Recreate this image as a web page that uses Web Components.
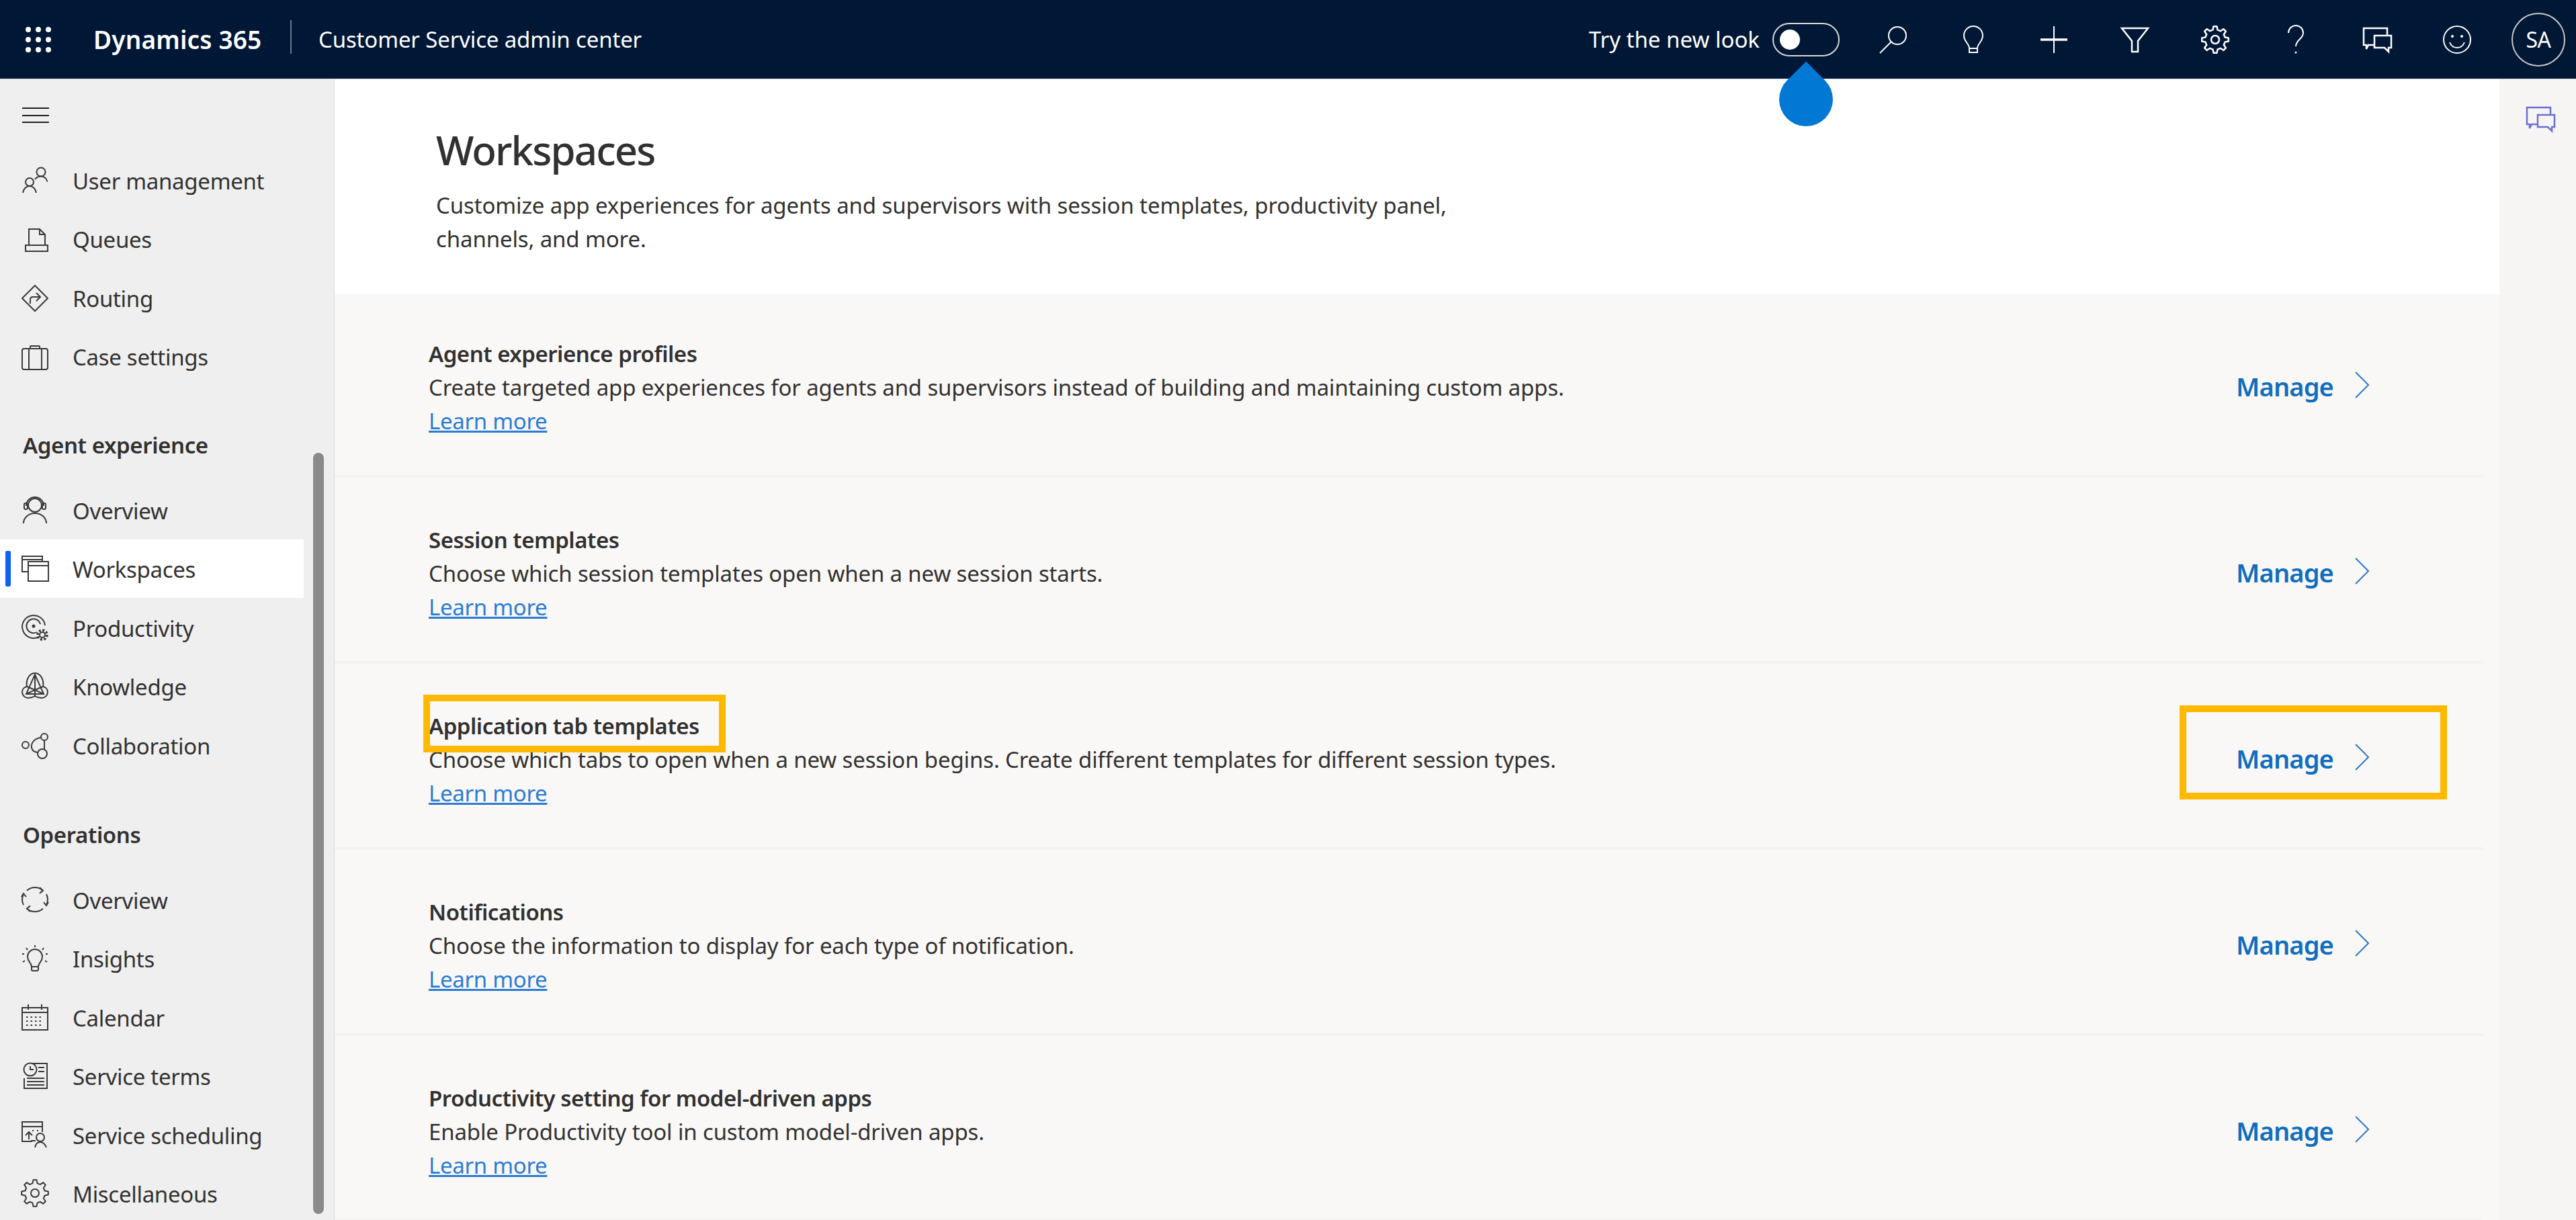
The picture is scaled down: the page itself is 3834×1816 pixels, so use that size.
<!DOCTYPE html>
<html lang="en">
<head>
<meta charset="utf-8">
<title>Customer Service admin center</title>
<style>
  html, body { margin: 0; height: 100%; overflow: hidden; background: #fff; }
  body { font-family: "Noto Sans", "Open Sans", sans-serif; color: #323130; }
</style>
</head>
<body>
<app-shell>
  <top-bar slot="top"></top-bar>
  <side-nav slot="nav">
    <nav-item icon="users">User management</nav-item>
    <nav-item icon="queues">Queues</nav-item>
    <nav-item icon="routing">Routing</nav-item>
    <nav-item icon="case">Case settings</nav-item>
    <nav-heading>Agent experience</nav-heading>
    <nav-item icon="agent">Overview</nav-item>
    <nav-item icon="windows" active>Workspaces</nav-item>
    <nav-item icon="target">Productivity</nav-item>
    <nav-item icon="knowledge">Knowledge</nav-item>
    <nav-item icon="collab">Collaboration</nav-item>
    <nav-heading style="margin-top:1.5px">Operations</nav-heading>
    <nav-item icon="cycle">Overview</nav-item>
    <nav-item icon="insights">Insights</nav-item>
    <nav-item icon="calendar">Calendar</nav-item>
    <nav-item icon="terms">Service terms</nav-item>
    <nav-item icon="schedule">Service scheduling</nav-item>
    <nav-item icon="gear">Miscellaneous</nav-item>
  </side-nav>
  <page-intro slot="main" heading="Workspaces">Customize app experiences for agents and supervisors with session templates, productivity panel, channels, and more.</page-intro>
  <work-row slot="main" first heading="Agent experience profiles">Create targeted app experiences for agents and supervisors instead of building and maintaining custom apps.</work-row>
  <work-row slot="main" heading="Session templates">Choose which session templates open when a new session starts.</work-row>
  <work-row slot="main" marked heading="Application tab templates">Choose which tabs to open when a new session begins. Create different templates for different session types.</work-row>
  <work-row slot="main" heading="Notifications">Choose the information to display for each type of notification.</work-row>
  <work-row slot="main" heading="Productivity setting for model-driven apps">Enable Productivity tool in custom model-driven apps.</work-row>
  <side-rail slot="rail"></side-rail>
</app-shell>

<script>
function gearPath(c, ro, ri, n) {
  var p = Math.PI * 2 / n, pts = [];
  for (var i = 0; i < n; i++) {
    var a = i * p;
    [[ri, -0.3], [ro, -0.16], [ro, 0.16], [ri, 0.3]].forEach(function (q) {
      var x = c + q[0] * Math.cos(a + q[1] * p), y = c + q[0] * Math.sin(a + q[1] * p);
      pts.push(x.toFixed(1) + " " + y.toFixed(1));
    });
  }
  return "M" + pts.join("L") + "Z";
}

// 40 box for the side nav, 48 box for the top bar
var ICONS = {
  users: '<circle cx="29" cy="8" r="6.5"/><path d="M20 19c2-3 5-4.500 9-4.500s8 2.500 9.500 8"/><circle cx="12" cy="23" r="6"/><path d="M2 39c1-6 5-10 10-10s9 4 10 10"/>',
  queues: '<path d="M11 30V6h16l8 8v16M27 6v8h8"/><rect x="6" y="30" width="33" height="9"/>',
  routing: '<path d="M20 2l19 19-19 19L1 21z" stroke-linejoin="round"/><path d="M13 29v-6c0-3 2-4 4-4h11M22 13l6 6-6 6"/>',
  case: '<rect x="1" y="9" width="38" height="31" rx="3"/><path d="M11 9v31M30 9v31M13 9V6a1 1 0 011-1h12a1 1 0 011 1v3"/>',
  agent: '<circle cx="20" cy="13" r="10"/><path d="M3 40c0-8 7-15 17-15s17 7 17 15M7 14a13 13 0 0126 0"/><rect x="4" y="10" width="5" height="9" rx="2"/><rect x="31" y="10" width="5" height="9" rx="2"/>',
  windows: '<path d="M9 25H1V2h30v8M1 7h30"/><rect x="10" y="10" width="30" height="29"/><path d="M10 16h30"/>',
  target: '<path d="M26 34A17 17 0 1135 17"/><path d="M23 27A10.500 10.500 0 1128 15"/><circle cx="18" cy="18" r="2.500" fill="currentColor" stroke="none"/><circle cx="31" cy="31" r="4"/><circle cx="31" cy="31" r="7" stroke-width="3.500" stroke-dasharray="3 2.500"/>',
  knowledge: '<path d="M8 21C6 9 13 1 20 1s14 8 12 20"/><path d="M8 21c-5 1-7 5-7 8 0 5 4 9 9 9 4 0 7-1 10-3 3 2 6 3 10 3 5 0 9-4 9-9 0-3-2-7-7-8"/><path d="M20 3L7 32h26zM20 3v32M8 21l12 5 12-5M7 32l13-6 13 6"/>',
  collab: '<circle cx="6" cy="20" r="5"/><circle cx="34" cy="8" r="5"/><circle cx="31" cy="33" r="7"/><path d="M29 9c-9 1-15 7-14 15 1 4 4 7 10 7M34 13v13"/>',
  cycle: '<path d="M8 6.600A18 18 0 0132 6.600M37 12A18 18 0 0137 28M32 33.400A18 18 0 018 33.400M3 28A18 18 0 013 12"/><path d="M27 2l5 4.600-5 4M13 38l-5-4.600 5-4M33 24l4 5 3-5M0 16l3-5 4 5"/>',
  insights: '<path d="M15 33c0-6-6-7-6-15a11 11 0 0122 0c0 8-6 9-6 15v4c0 1-1 2-2 2h-6c-1 0-2-1-2-2z"/><path d="M15 33h10M20 1v3M7 5l2 3M33 5l-2 3M1 14h3M36 14h3M2 26l3-2M38 26l-3-2"/>',
  calendar: '<rect x="1" y="6" width="38" height="33"/><path d="M1 13h38M10 1v8M30 1v8"/><path d="M7 20h26M7 26h26M7 32h26" stroke-dasharray="2.500 4"/>',
  terms: '<path d="M4 24v15h34V2H16"/><circle cx="13" cy="11" r="9.500"/><path d="M13 6v5h5M25 8h9M25 14h9M8 24h26M8 29h26M8 34h26"/>',
  schedule: '<path d="M16 30H1V1h30v15M1 8h30"/><path d="M11 27V16M6 21l5-5 5 5M14 29h7"/><circle cx="28" cy="24" r="6"/><path d="M20 39c1-5 4-8 8-8s7 3 9 8"/><path d="M16 14h2M23 14h2"/>',
  gear: '<path d="' + gearPath(20, 20, 15, 8) + '" stroke-linejoin="round"/><circle cx="20" cy="20" r="6"/>',
  search: '<circle cx="31" cy="18" r="13"/><path d="M22 27L5 44"/>',
  bulb: '<path d="M18 37c0-7-8-10-8-19a14 14 0 0128 0c0 9-8 12-8 19v6H18z"/><path d="M18 37h12"/>',
  plus: '<path d="M24 4v40"/><path d="M4 24h40" stroke-width="3.500"/>',
  filter: '<path d="M5 7h39L29 26v16h-9V26z" stroke-width="2.500"/>',
  cog: '<path d="' + gearPath(24, 20, 15, 8) + '" stroke-linejoin="round" stroke-width="2.500"/><circle cx="24" cy="24" r="6" stroke-width="2.500"/>',
  help: '<path d="M13 14a11 11 0 0122 0c0 9-11 10-11 20"/><circle cx="24" cy="43" r="1.500" fill="currentColor" stroke="none"/>',
  chat: '<path d="M20 32h-8l-3 6v-6H5V7h35v11" stroke-width="2.500"/><path d="M21 18h25v18h-4v6l-6-6H21z" stroke-width="2.500"/>',
  smile: '<circle cx="24" cy="24" r="20"/><circle cx="17" cy="19" r="2" fill="currentColor" stroke="none"/><circle cx="31" cy="19" r="2" fill="currentColor" stroke="none"/><path d="M13 28c2 5 6 8 11 8s9-3 11-8"/>'
};

class AppIcon extends HTMLElement {
  connectedCallback() {
    var size = this.getAttribute("size") || 40;
    this.attachShadow({ mode: "open" }).innerHTML = `
      <style>
        :host { display: block; width: ${size}px; height: ${size}px; flex: none; }
        svg { display: block; overflow: visible; fill: none; stroke: currentColor; stroke-width: 2; }
      </style>
      <svg width="${size}" height="${size}" viewBox="0 0 ${size} ${size}">${ICONS[this.getAttribute("name")]}</svg>`;
  }
}
customElements.define("app-icon", AppIcon);

var shellTpl = document.createElement("template");
shellTpl.innerHTML = `
<style>
  :host { display: grid; grid-template-columns: 498px 1fr 114px; grid-template-rows: 118px 1fr; width: 3834px; height: 1816px; overflow: hidden; position: relative; }
  .top { grid-column: 1 / 4; }
  .main { overflow: hidden; background: #faf8f7; }
  /* the coach mark sits over the bar and the page */
  .drop { position: absolute; left: 2648px; top: 108px; width: 80px; height: 80px; background: #0078d4; border-radius: 50% 0 50% 50%; transform: rotate(-45deg); }
</style>
<div class="top"><slot name="top"></slot></div>
<slot name="nav"></slot>
<div class="main"><slot name="main"></slot></div>
<slot name="rail"></slot>
<div class="drop"></div>`;
class AppShell extends HTMLElement {
  constructor() { super(); this.attachShadow({ mode: "open" }).appendChild(shellTpl.content.cloneNode(true)); }
}
customElements.define("app-shell", AppShell);

var topTpl = document.createElement("template");
topTpl.innerHTML = `
<style>
  :host { display: flex; align-items: center; height: 118px; box-sizing: border-box; border-bottom: 1px solid #cfd3d9; background: #001736; color: #fff; padding-right: 16px; }
  .waffle { display: grid; grid-template-columns: repeat(3, 8px); gap: 7px; margin-left: 38px; }
  .waffle i { width: 8px; height: 8px; border-radius: 50%; background: #fff; }
  .brand { margin-left: 63px; font-size: 37px; font-weight: 600; letter-spacing: .15px; white-space: nowrap; width: 293px; }
  .sep { width: 2px; height: 50px; background: #6b7a8f; margin-top: -8px; }
  .app { margin-left: 40px; font-size: 33px; letter-spacing: -.15px; white-space: nowrap; }
  .try { margin-left: auto; font-size: 33px; letter-spacing: 0; white-space: nowrap; }
  .toggle { width: 100px; height: 50px; box-sizing: border-box; border: 2px solid #d8d8d8; border-radius: 25px; margin: 0 19px; display: flex; align-items: center; padding-left: 9px; }
  .toggle i { width: 30px; height: 30px; border-radius: 50%; background: #fff; }
  .cell { width: 120px; display: flex; justify-content: center; }
  .avatar { width: 80px; height: 80px; box-sizing: border-box; margin-left: 21px; border: 2px solid #c8c8c8; border-radius: 50%; display: flex; align-items: center; justify-content: center; font-size: 32px; letter-spacing: -.5px; }
</style>
<div class="waffle"><i></i><i></i><i></i><i></i><i></i><i></i><i></i><i></i><i></i></div>
<div class="brand">Dynamics 365</div>
<div class="sep"></div>
<div class="app">Customer Service admin center</div>
<div class="try">Try the new look</div>
<div class="toggle"><i></i></div>
<div class="cell"><app-icon name="search" size="48"></app-icon></div>
<div class="cell"><app-icon name="bulb" size="48"></app-icon></div>
<div class="cell"><app-icon name="plus" size="48"></app-icon></div>
<div class="cell"><app-icon name="filter" size="48"></app-icon></div>
<div class="cell"><app-icon name="cog" size="48"></app-icon></div>
<div class="cell"><app-icon name="help" size="48"></app-icon></div>
<div class="cell"><app-icon name="chat" size="48"></app-icon></div>
<div class="cell"><app-icon name="smile" size="48"></app-icon></div>
<div class="avatar">SA</div>`;
class TopBar extends HTMLElement {
  constructor() { super(); this.attachShadow({ mode: "open" }).appendChild(topTpl.content.cloneNode(true)); }
}
customElements.define("top-bar", TopBar);

var navTpl = document.createElement("template");
navTpl.innerHTML = `
<style>
  :host { display: block; position: relative; background: #efefef; border-right: 1px solid #dcdcdc; overflow: hidden; height: 1698px; }
  .burger { height: 106px; box-sizing: border-box; padding: 42px 0 0 33px; }
  .burger i { display: block; width: 40px; height: 2px; background: #201f1e; margin-bottom: 8.500px; }
  .thumb { position: absolute; left: 466px; top: 556px; width: 16px; height: 1133px; border-radius: 8px; background: #8a8a8a; }
</style>
<div class="burger"><i></i><i></i><i></i></div>
<slot></slot>
<div class="thumb"></div>`;
class SideNav extends HTMLElement {
  constructor() { super(); this.attachShadow({ mode: "open" }).appendChild(navTpl.content.cloneNode(true)); }
}
customElements.define("side-nav", SideNav);

class NavHeading extends HTMLElement {
  constructor() {
    super();
    this.attachShadow({ mode: "open" }).innerHTML = `
      <style>
        :host { display: block; box-sizing: border-box; height: 141px; padding: 64px 0 0 34px; font-size: 33px; line-height: 50px; font-weight: 600; letter-spacing: -.4px; color: #323130; }
      </style>
      <slot></slot>`;
  }
}
customElements.define("nav-heading", NavHeading);

class NavItem extends HTMLElement {
  constructor() {
    super();
    this.attachShadow({ mode: "open" }).innerHTML = `
      <style>
        :host { display: flex; align-items: center; width: 452px; height: 87.500px; box-sizing: border-box; padding-left: 32px; position: relative; font-size: 33px; line-height: 50px; letter-spacing: -.3px; color: #323130; }
        :host([active]) { background: #fff; }
        :host([active])::before { content: ""; position: absolute; left: 8px; top: 17px; width: 8px; height: 53px; border-radius: 2px; background: #0b63f6; }
        app-icon { color: #3b3a39; }
        span { margin-left: 36px; padding-top: 4px; white-space: nowrap; }
      </style>
      <span><slot></slot></span>`;
  }
  connectedCallback() {
    var ic = document.createElement("app-icon");
    ic.setAttribute("name", this.getAttribute("icon"));
    this.shadowRoot.insertBefore(ic, this.shadowRoot.querySelector("span"));
  }
}
customElements.define("nav-item", NavItem);

class PageIntro extends HTMLElement {
  constructor() {
    super();
    this.attachShadow({ mode: "open" }).innerHTML = `
      <style>
        :host { display: block; box-sizing: border-box; height: 320px; padding: 65px 0 0 151px; background: #fff; }
        h1 { margin: 0 0 18px; font-size: 60px; line-height: 80px; font-weight: 500; letter-spacing: -1.9px; color: #323130; }
        p { margin: 0; width: 1560px; font-size: 33px; line-height: 50px; letter-spacing: -.12px; color: #323130; }
      </style>
      <h1></h1>
      <p><slot></slot></p>`;
  }
  connectedCallback() { this.shadowRoot.querySelector("h1").textContent = this.getAttribute("heading"); }
}
customElements.define("page-intro", PageIntro);

var rowTpl = document.createElement("template");
rowTpl.innerHTML = `
<style>
  :host { display: flex; justify-content: space-between; position: relative; box-sizing: border-box; height: 277px; margin-right: 24px; padding: 68px 0 0 140px; border-bottom: 4px solid #f3f2f1; }
  :host([first]) { height: 273px; padding-top: 64px; }
  h2 { margin: 0; font-size: 33px; line-height: 50px; font-weight: 600; letter-spacing: -.5px; color: #323130; }
  p { margin: 0; font-size: 33px; line-height: 50px; letter-spacing: -.15px; color: #323130; }
  a { font-size: 33px; line-height: 50px; letter-spacing: -.3px; color: #2b7cd3; text-decoration: underline; }
  .manage { display: flex; margin: 48px 169px 0 0; height: 50px; }
  .manage span { font-size: 38px; line-height: 50px; font-weight: 600; letter-spacing: -.85px; color: #106ebe; }
  .manage svg { margin: 3px 0 0 32px; fill: none; stroke: #2b78c8; stroke-width: 2; }
  /* annotation frames from the screenshot */
  .frame { display: none; position: absolute; box-sizing: border-box; border: 10px solid #ffb900; }
  :host([marked]) .frame { display: block; }
  .f1 { left: 132px; top: 46px; width: 450px; height: 86px; }
  .f2 { left: 2746px; top: 62px; width: 398px; height: 140px; }
</style>
<div class="text">
  <h2></h2>
  <p><slot></slot></p>
  <a href="#">Learn more</a>
</div>
<div class="manage"><span>Manage</span><svg width="22" height="40" viewBox="0 0 22 40"><path d="M1 1l19 19L1 39"/></svg></div>
<div class="frame f1"></div>
<div class="frame f2"></div>`;
class WorkRow extends HTMLElement {
  constructor() { super(); this.attachShadow({ mode: "open" }).appendChild(rowTpl.content.cloneNode(true)); }
  connectedCallback() { this.shadowRoot.querySelector("h2").textContent = this.getAttribute("heading"); }
}
customElements.define("work-row", WorkRow);

class SideRail extends HTMLElement {
  constructor() {
    super();
    this.attachShadow({ mode: "open" }).innerHTML = `
      <style>
        :host { display: block; box-sizing: border-box; height: 1698px; background: #f6f5f4; padding: 35px 0 0 36px; color: #6b6fd4; }
      </style>
      <app-icon name="chat" size="48"></app-icon>`;
  }
}
customElements.define("side-rail", SideRail);
</script>
</body>
</html>
